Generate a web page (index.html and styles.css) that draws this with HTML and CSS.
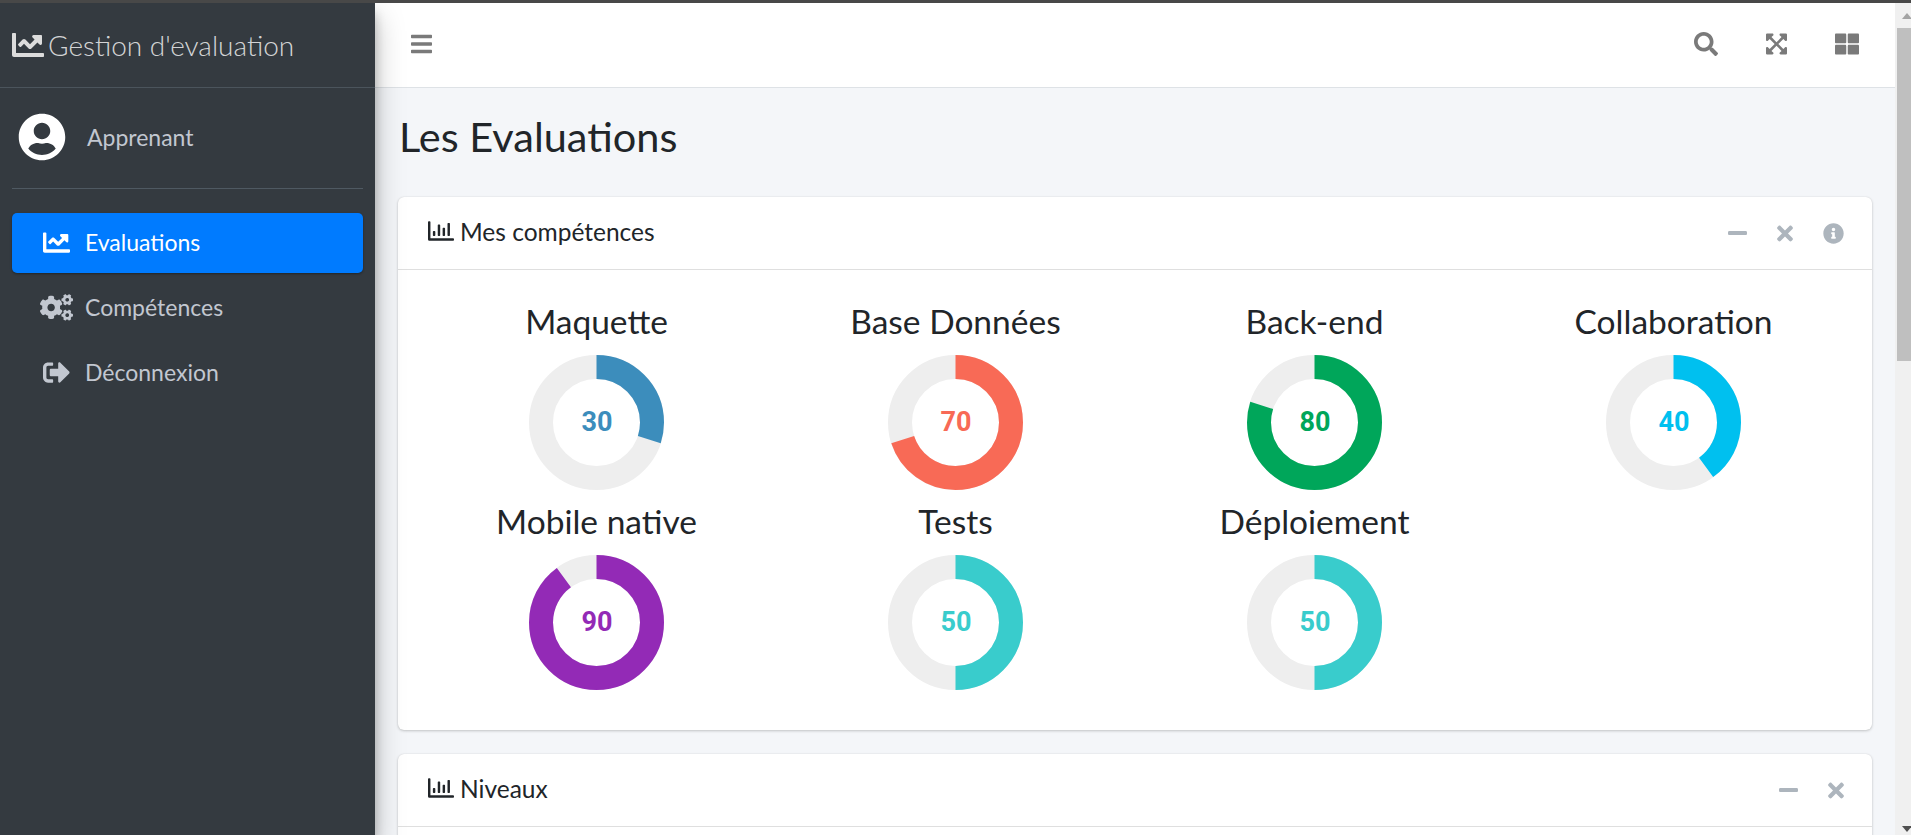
FILE: index.html
```html
<!DOCTYPE html>
<html lang="fr">
<head>
    <meta charset="UTF-8">
    <meta name="viewport" content="width=device-width, initial-scale=1.0">
    <title>Gestion d'evaluation</title>
    <link rel="stylesheet" href="styles.css">
</head>
<body>
    <svg class="icon-defs" aria-hidden="true">
        <symbol id="i-chart-line" viewBox="0 0 512 512"><path d="M496 384H64V80c0-8.84-7.16-16-16-16H16C7.16 64 0 71.16 0 80v336c0 17.67 14.33 32 32 32h464c8.84 0 16-7.16 16-16v-32c0-8.84-7.16-16-16-16zM464 96H345.94c-21.38 0-32.09 25.85-16.97 40.97l32.4 32.4L288 242.75l-73.37-73.37c-12.5-12.5-32.76-12.5-45.25 0l-68.69 68.69c-6.25 6.25-6.25 16.38 0 22.63l22.62 22.62c6.25 6.25 16.38 6.25 22.63 0L192 237.25l73.37 73.37c12.5 12.5 32.76 12.5 45.25 0l96-96 32.4 32.4c15.12 15.12 40.97 4.41 40.97-16.97V112c.01-8.84-7.15-16-15.99-16z"/></symbol>
        <symbol id="i-chart-bar" viewBox="0 0 512 512"><path d="M396.8 352h22.4c6.4 0 12.8-6.4 12.8-12.8V108.8c0-6.4-6.4-12.8-12.8-12.8h-22.4c-6.4 0-12.8 6.4-12.8 12.8v230.4c0 6.4 6.4 12.8 12.8 12.8zm-192 0h22.4c6.4 0 12.8-6.4 12.8-12.8V140.8c0-6.4-6.4-12.8-12.8-12.8h-22.4c-6.4 0-12.8 6.4-12.8 12.8v198.4c0 6.4 6.4 12.8 12.8 12.8zm96 0h22.4c6.4 0 12.8-6.4 12.8-12.8V204.8c0-6.4-6.4-12.8-12.8-12.8h-22.4c-6.4 0-12.8 6.4-12.8 12.8v134.4c0 6.4 6.4 12.8 12.8 12.8zM496 400H48V80c0-8.84-7.16-16-16-16H16C7.16 64 0 71.16 0 80v336c0 17.67 14.33 32 32 32h464c8.84 0 16-7.16 16-16v-16c0-8.84-7.16-16-16-16zm-387.2-48h22.4c6.4 0 12.8-6.4 12.8-12.8v-70.4c0-6.4-6.4-12.8-12.8-12.8h-22.4c-6.4 0-12.8 6.4-12.8 12.8v70.4c0 6.4 6.4 12.8 12.8 12.8z"/></symbol>
        <symbol id="i-minus" viewBox="0 0 448 512"><path d="M416 208H32c-17.67 0-32 14.33-32 32v32c0 17.67 14.33 32 32 32h384c17.67 0 32-14.33 32-32v-32c0-17.67-14.33-32-32-32z"/></symbol>
        <symbol id="i-times" viewBox="0 0 352 512"><path d="M242.72 256l100.07-100.07c12.28-12.28 12.28-32.19 0-44.48l-22.24-22.24c-12.28-12.28-32.19-12.28-44.48 0L176 189.28 75.93 89.21c-12.28-12.28-32.19-12.28-44.48 0L9.21 111.45c-12.28 12.28-12.28 32.19 0 44.48L109.28 256 9.21 356.07c-12.28 12.28-12.28 32.19 0 44.48l22.24 22.24c12.28 12.28 32.2 12.28 44.48 0L176 322.72l100.07 100.07c12.28 12.28 32.2 12.28 44.48 0l22.24-22.24c12.28-12.28 12.28-32.19 0-44.48L242.72 256z"/></symbol>
    </svg>

    <div class="app">
        <aside class="sidebar">
            <div class="brand">
                <svg class="brand-icon"><use href="#i-chart-line"/></svg>
                <span>Gestion d'evaluation</span>
            </div>
            <div class="sidebar-inner">
                <div class="user-panel">
                    <svg class="user-icon" viewBox="0 0 496 512"><path d="M248 8C111 8 0 119 0 256s111 248 248 248 248-111 248-248S385 8 248 8zm0 96c48.6 0 88 39.4 88 88s-39.4 88-88 88-88-39.4-88-88 39.4-88 88-88zm0 344c-58.7 0-111.3-26.6-146.5-68.2 18.8-35.4 55.6-59.8 98.5-59.8 2.4 0 4.8.4 7.1 1.1 13 4.2 26.6 6.9 40.9 6.9 14.3 0 28-2.7 40.9-6.9 2.3-.7 4.7-1.1 7.1-1.1 42.9 0 79.7 24.4 98.5 59.8C359.3 421.4 306.7 448 248 448z"/></svg>
                    <span>Apprenant</span>
                </div>
                <nav class="nav">
                    <a class="nav-link active">
                        <span class="nav-icon"><svg class="icon-chart"><use href="#i-chart-line"/></svg></span>
                        Evaluations
                    </a>
                    <a class="nav-link">
                        <span class="nav-icon"><svg class="icon-cogs" viewBox="0 0 640 512"><path d="M512.1 191l-8.2 14.3c-3 5.3-9.4 7.5-15.1 5.4-11.8-4.4-22.6-10.7-32.1-18.6-4.6-3.8-5.8-10.5-2.8-15.7l8.2-14.3c-6.9-8-12.3-17.3-15.9-27.4h-16.5c-6 0-11.2-4.3-12.2-10.3-2-12-2.1-24.6 0-37.1 1-6 6.2-10.4 12.2-10.4h16.5c3.6-10.1 9-19.4 15.9-27.4l-8.2-14.3c-3-5.2-1.9-11.9 2.8-15.7 9.5-7.9 20.4-14.2 32.1-18.6 5.7-2.1 12.1.1 15.1 5.4l8.2 14.3c10.5-1.9 21.2-1.9 31.7 0L552 6.3c3-5.3 9.4-7.5 15.1-5.4 11.8 4.4 22.6 10.7 32.1 18.6 4.6 3.8 5.8 10.5 2.8 15.7l-8.2 14.3c6.9 8 12.3 17.3 15.9 27.4h16.5c6 0 11.2 4.3 12.2 10.3 2 12 2.1 24.6 0 37.1-1 6-6.2 10.4-12.2 10.4h-16.5c-3.6 10.1-9 19.4-15.9 27.4l8.2 14.3c3 5.2 1.9 11.9-2.8 15.7-9.5 7.9-20.4 14.2-32.1 18.6-5.7 2.1-12.1-.1-15.1-5.4l-8.2-14.3c-10.4 1.9-21.2 1.9-31.7 0zm-10.5-58.8c38.5 29.6 82.4-14.3 52.8-52.8-38.5-29.7-82.4 14.3-52.8 52.8zM386.3 286.1l33.7 16.8c10.1 5.8 14.5 18.1 10.5 29.1-8.9 24.2-26.4 46.4-42.6 65.8-7.4 8.9-20.2 11.1-30.3 5.3l-29.1-16.8c-16 13.7-34.6 24.6-54.9 31.7v33.6c0 11.6-8.3 21.6-19.7 23.6-24.6 4.2-50.4 4.4-75.9 0-11.5-2-20-11.9-20-23.6V418c-20.3-7.2-38.9-18-54.9-31.7L74 403c-10 5.8-22.9 3.6-30.3-5.3-16.2-19.4-33.3-41.6-42.2-65.7-4-10.9.4-23.2 10.5-29.1l33.3-16.8c-3.9-20.9-3.9-42.4 0-63.4L12 205.8c-10.1-5.8-14.6-18.1-10.5-29 8.9-24.2 26-46.4 42.2-65.8 7.4-8.9 20.2-11.1 30.3-5.3l29.1 16.8c16-13.7 34.6-24.6 54.9-31.7V57.1c0-11.5 8.2-21.5 19.6-23.5 24.6-4.2 50.5-4.4 76-.1 11.5 2 20 11.9 20 23.6v33.6c20.3 7.2 38.9 18 54.9 31.7l29.1-16.8c10-5.8 22.9-3.6 30.3 5.3 16.2 19.4 33.2 41.6 42.1 65.8 4 10.9.1 23.2-10 29.1l-33.7 16.8c3.9 21 3.9 42.5 0 63.5zm-117.6 21.1c59.2-77-28.7-164.9-105.7-105.7-59.2 77 28.7 164.9 105.7 105.7zm243.4 182.7l-8.2 14.3c-3 5.3-9.4 7.5-15.1 5.4-11.8-4.4-22.6-10.7-32.1-18.6-4.6-3.8-5.8-10.5-2.8-15.7l8.2-14.3c-6.9-8-12.3-17.3-15.9-27.4h-16.5c-6 0-11.2-4.3-12.2-10.3-2-12-2.1-24.6 0-37.1 1-6 6.2-10.4 12.2-10.4h16.5c3.6-10.1 9-19.4 15.9-27.4l-8.2-14.3c-3-5.2-1.9-11.9 2.8-15.7 9.5-7.9 20.4-14.2 32.1-18.6 5.7-2.1 12.1.1 15.1 5.4l8.2 14.3c10.5-1.9 21.2-1.9 31.7 0l8.2-14.3c3-5.3 9.4-7.5 15.1-5.4 11.8 4.4 22.6 10.7 32.1 18.6 4.6 3.8 5.8 10.5 2.8 15.7l-8.2 14.3c6.9 8 12.3 17.3 15.9 27.4h16.5c6 0 11.2 4.3 12.2 10.3 2 12 2.1 24.6 0 37.1-1 6-6.2 10.4-12.2 10.4h-16.5c-3.6 10.1-9 19.4-15.9 27.4l8.2 14.3c3 5.2 1.9 11.9-2.8 15.7-9.5 7.9-20.4 14.2-32.1 18.6-5.7 2.1-12.1-.1-15.1-5.4l-8.2-14.3c-10.4 1.9-21.2 1.9-31.7 0zM501.6 431c38.5 29.6 82.4-14.3 52.8-52.8-38.5-29.6-82.4 14.3-52.8 52.8z"/></svg></span>
                        Compétences
                    </a>
                    <a class="nav-link">
                        <span class="nav-icon"><svg class="icon-chart" viewBox="0 0 512 512"><path d="M497 273L329 441c-15 15-41 4.5-41-17v-96H152c-13.3 0-24-10.7-24-24v-96c0-13.3 10.7-24 24-24h136V88c0-21.4 25.9-32 41-17l168 168c9.3 9.4 9.3 24.6 0 34zM192 436v-40c0-6.6-5.4-12-12-12H96c-17.7 0-32-14.3-32-32V160c0-17.7 14.3-32 32-32h84c6.6 0 12-5.4 12-12V76c0-6.6-5.4-12-12-12H96c-53 0-96 43-96 96v192c0 53 43 96 96 96h84c6.6 0 12-5.4 12-12z"/></svg></span>
                        Déconnexion
                    </a>
                </nav>
            </div>
        </aside>

        <div class="main">
            <header class="topbar">
                <svg class="top-icon bars" viewBox="0 0 448 512"><path d="M16 132h416c8.837 0 16-7.163 16-16V76c0-8.837-7.163-16-16-16H16C7.163 60 0 67.163 0 76v40c0 8.837 7.163 16 16 16zm0 160h416c8.837 0 16-7.163 16-16v-40c0-8.837-7.163-16-16-16H16c-8.837 0-16 7.163-16 16v40c0 8.837 7.163 16 16 16zm0 160h416c8.837 0 16-7.163 16-16v-40c0-8.837-7.163-16-16-16H16c-8.837 0-16 7.163-16 16v40c0 8.837 7.163 16 16 16z"/></svg>
                <div class="top-actions">
                    <svg class="top-icon wide" viewBox="0 0 512 512"><path d="M505 442.7L405.3 343c-4.5-4.5-10.6-7-17-7H372c27.6-35.3 44-79.7 44-128C416 93.1 322.9 0 208 0S0 93.1 0 208s93.1 208 208 208c48.3 0 92.7-16.4 128-44v16.3c0 6.4 2.5 12.5 7 17l99.7 99.7c9.4 9.4 24.6 9.4 33.9 0l28.3-28.3c9.4-9.4 9.4-24.6.1-34zM208 336c-70.7 0-128-57.2-128-128 0-70.7 57.2-128 128-128 70.7 0 128 57.2 128 128 0 70.7-57.2 128-128 128z"/></svg>
                    <svg class="top-icon bars" viewBox="0 0 448 512"><path d="M448 344v112a23.94 23.94 0 0 1-24 24H312c-21.39 0-32.09-25.9-17-41l36.2-36.2L224 295.6 116.77 402.9 153 439c15.09 15.1 4.39 41-17 41H24a23.94 23.94 0 0 1-24-24V344c0-21.4 25.89-32 41-17l36.19 36.2L184.46 256 77.18 148.7 41 185c-15.1 15.1-41 4.4-41-17V56a23.94 23.94 0 0 1 24-24h112c21.39 0 32.09 25.9 17 41l-36.2 36.2L224 216.4l107.23-107.3L295 73c-15.09-15.1-4.39-41 17-41h112a23.94 23.94 0 0 1 24 24v112c0 21.4-25.89 32-41 17l-36.19-36.2L263.54 256l107.28 107.3L407 327.1c15.1-15.2 41-4.5 41 16.9z"/></svg>
                    <svg class="top-icon wide" viewBox="0 0 512 512"><path d="M296 32h192c13.255 0 24 10.745 24 24v160c0 13.255-10.745 24-24 24H296c-13.255 0-24-10.745-24-24V56c0-13.255 10.745-24 24-24zm-80 0H24C10.745 32 0 42.745 0 56v160c0 13.255 10.745 24 24 24h192c13.255 0 24-10.745 24-24V56c0-13.255-10.745-24-24-24zM0 296v160c0 13.255 10.745 24 24 24h192c13.255 0 24-10.745 24-24V296c0-13.255-10.745-24-24-24H24c-13.255 0-24 10.745-24 24zm296 184h192c13.255 0 24-10.745 24-24V296c0-13.255-10.745-24-24-24H296c-13.255 0-24 10.745-24 24v160c0 13.255 10.745 24 24 24z"/></svg>
                </div>
            </header>

            <main class="content">
                <h1 class="page-title">Les Evaluations</h1>

                <section class="card">
                    <div class="card-header">
                        <h3 class="card-title"><svg class="title-icon"><use href="#i-chart-bar"/></svg>Mes compétences</h3>
                        <div class="card-tools">
                            <svg class="tool-minus"><use href="#i-minus"/></svg>
                            <svg class="tool-times"><use href="#i-times"/></svg>
                            <svg class="tool-info" viewBox="0 0 512 512"><path d="M256 8C119.043 8 8 119.083 8 256c0 136.997 111.043 248 248 248s248-111.003 248-248C504 119.083 392.957 8 256 8zm0 110c23.196 0 42 18.804 42 42s-18.804 42-42 42-42-18.804-42-42 18.804-42 42-42zm56 254c0 6.627-5.373 12-12 12h-88c-6.627 0-12-5.373-12-12v-24c0-6.627 5.373-12 12-12h12v-64h-12c-6.627 0-12-5.373-12-12v-24c0-6.627 5.373-12 12-12h64c6.627 0 12 5.373 12 12v100h12c6.627 0 12 5.373 12 12v24z"/></svg>
                        </div>
                    </div>
                    <div class="card-body skills">
                        <div class="skill blue">
                            <div class="skill-name">Maquette</div>
                            <svg class="donut" viewBox="0 0 135 135"><circle class="track" cx="67.5" cy="67.5" r="55.5"/><circle class="arc" cx="67.5" cy="67.5" r="55.5" pathLength="100" stroke-dasharray="30 100"/><text x="68" y="67">30</text></svg>
                        </div>
                        <div class="skill red">
                            <div class="skill-name">Base Données</div>
                            <svg class="donut" viewBox="0 0 135 135"><circle class="track" cx="67.5" cy="67.5" r="55.5"/><circle class="arc" cx="67.5" cy="67.5" r="55.5" pathLength="100" stroke-dasharray="70 100"/><text x="68" y="67">70</text></svg>
                        </div>
                        <div class="skill green">
                            <div class="skill-name">Back-end</div>
                            <svg class="donut" viewBox="0 0 135 135"><circle class="track" cx="67.5" cy="67.5" r="55.5"/><circle class="arc" cx="67.5" cy="67.5" r="55.5" pathLength="100" stroke-dasharray="80 100"/><text x="68" y="67">80</text></svg>
                        </div>
                        <div class="skill sky">
                            <div class="skill-name">Collaboration</div>
                            <svg class="donut" viewBox="0 0 135 135"><circle class="track" cx="67.5" cy="67.5" r="55.5"/><circle class="arc" cx="67.5" cy="67.5" r="55.5" pathLength="100" stroke-dasharray="40 100"/><text x="68" y="67">40</text></svg>
                        </div>
                        <div class="skill purple">
                            <div class="skill-name">Mobile native</div>
                            <svg class="donut" viewBox="0 0 135 135"><circle class="track" cx="67.5" cy="67.5" r="55.5"/><circle class="arc" cx="67.5" cy="67.5" r="55.5" pathLength="100" stroke-dasharray="90 100"/><text x="68" y="67">90</text></svg>
                        </div>
                        <div class="skill teal">
                            <div class="skill-name">Tests</div>
                            <svg class="donut" viewBox="0 0 135 135"><circle class="track" cx="67.5" cy="67.5" r="55.5"/><circle class="arc" cx="67.5" cy="67.5" r="55.5" pathLength="100" stroke-dasharray="50 100"/><text x="68" y="67">50</text></svg>
                        </div>
                        <div class="skill teal">
                            <div class="skill-name">Déploiement</div>
                            <svg class="donut" viewBox="0 0 135 135"><circle class="track" cx="67.5" cy="67.5" r="55.5"/><circle class="arc" cx="67.5" cy="67.5" r="55.5" pathLength="100" stroke-dasharray="50 100"/><text x="68" y="67">50</text></svg>
                        </div>
                    </div>
                </section>

                <section class="card">
                    <div class="card-header">
                        <h3 class="card-title"><svg class="title-icon"><use href="#i-chart-bar"/></svg>Niveaux</h3>
                        <div class="card-tools">
                            <svg class="tool-minus"><use href="#i-minus"/></svg>
                            <svg class="tool-times"><use href="#i-times"/></svg>
                        </div>
                    </div>
                    <div class="card-body levels"></div>
                </section>
            </main>
        </div>

        <div class="scrollbar">
            <span class="arrow-up"></span>
            <span class="thumb"></span>
            <span class="arrow-down"></span>
        </div>
    </div>
</body>
</html>
```

FILE: styles.css
```css
* {
    box-sizing: border-box;
}
html, body {
    height: 100%;
    margin: 0;
    overflow: hidden;
}
body {
    font-family: Lato, "Noto Sans", Arial, sans-serif;
    color: #212529;
    background: #f4f6f9;
    border-top: 3px solid #484848;
}
.icon-defs {
    display: none;
}
.app {
    display: flex;
    height: 832px;
}

/* sidebar */
.sidebar {
    flex: 0 0 375px;
    background: #343a40;
    position: relative;
    z-index: 2;
    box-shadow: 0 14px 28px rgba(0,0,0,0.25), 0 10px 10px rgba(0,0,0,0.22);
}
.brand {
    height: 85px;
    display: flex;
    align-items: center;
    padding-left: 12px;
    border-bottom: 1px solid #4b545c;
    color: rgba(255,255,255,0.8);
    font-size: 28px;
    font-weight: 300;
}
.brand-icon {
    width: 32px;
    height: 32px;
    margin-right: 4px;
    fill: #dcdcdc;
}
.sidebar-inner {
    padding: 0 12px;
}
.user-panel {
    height: 101px;
    display: flex;
    align-items: center;
    padding-left: 6px;
    padding-bottom: 2px;
    border-bottom: 1px solid #4f5962;
    color: #c2c7d0;
    font-size: 23px;
}
.user-icon {
    width: 48px;
    height: 48px;
    margin-right: 21px;
    fill: #fff;
}
.nav {
    display: flex;
    flex-direction: column;
    gap: 5px;
    padding-top: 24px;
}
.nav-link {
    height: 60px;
    display: flex;
    align-items: center;
    padding-bottom: 2px;
    border-radius: 5px;
    color: #c2c7d0;
    font-size: 23px;
}
.nav-link.active {
    background: #007bff;
    color: #fff;
    box-shadow: 0 1px 3px rgba(0,0,0,0.12), 0 1px 2px rgba(0,0,0,0.24);
}
.nav-icon {
    width: 73px;
    padding-left: 28px;
    display: flex;
    align-items: center;
    justify-content: flex-start;
}
.nav-icon svg {
    fill: currentColor;
}
.icon-chart {
    width: 27px;
    height: 27px;
    margin-left: 3px;
}
.icon-cogs {
    width: 33px;
    height: 27px;
}

/* main */
.main {
    flex: 1;
    min-width: 0;
    display: flex;
    flex-direction: column;
}
.topbar {
    flex: 0 0 85px;
    display: flex;
    align-items: center;
    justify-content: space-between;
    padding: 0 36px 2px 36px;
    background: #fff;
    border-bottom: 1px solid #dee2e6;
}
.top-icon {
    height: 24px;
    fill: #7a7a7a;
}
.top-icon.bars {
    width: 21px;
}
.top-icon.wide {
    width: 24px;
}
.top-actions {
    display: flex;
    align-items: center;
    gap: 48px;
}
.content {
    flex: 1;
    overflow: hidden;
    padding: 0 23px;
}
.page-title {
    margin: 0;
    height: 109px;
    padding: 24px 1px 0;
    font-size: 41.5px;
    font-weight: 400;
    line-height: 48px;
}

/* cards */
.card {
    background: #fff;
    border-radius: 6px;
    box-shadow: 0 0 1px rgba(0,0,0,0.125), 0 1px 3px rgba(0,0,0,0.2);
    margin-bottom: 24px;
}
.card-header {
    height: 73px;
    display: flex;
    align-items: center;
    justify-content: space-between;
    padding: 0 28px 0 30px;
    border-bottom: 1px solid rgba(0,0,0,0.125);
}
.card-title {
    display: flex;
    align-items: center;
    margin: 0 0 4px;
    font-size: 24.5px;
    font-weight: 400;
}
.title-icon {
    width: 26px;
    height: 26px;
    margin-right: 6px;
    fill: #212529;
}
.card-tools {
    display: flex;
    align-items: center;
    gap: 30px;
    fill: #adb5bd;
}
.tool-minus {
    width: 19px;
    height: 22px;
}
.tool-times {
    width: 16px;
    height: 23px;
}
.tool-info {
    width: 21px;
    height: 21px;
}
.skills {
    display: grid;
    grid-template-columns: repeat(4, 359px);
    grid-auto-rows: 200px;
    padding: 30px 19px;
}
.skill {
    display: flex;
    flex-direction: column;
    align-items: center;
}
.skill-name {
    height: 55px;
    color: #212529;
    font-size: 33.5px;
    line-height: 42px;
}
.levels {
    height: 200px;
}

/* donuts */
.donut {
    width: 135px;
    height: 135px;
    flex: none;
}
.donut circle {
    fill: none;
    stroke-width: 24;
}
.donut .track {
    stroke: #eeeeee;
}
.donut .arc {
    stroke: currentColor;
    transform: rotate(-90deg);
    transform-origin: 67.5px 67.5px;
}
.donut text {
    fill: currentColor;
    font-family: Roboto, "Liberation Sans", Arial, sans-serif;
    font-size: 27px;
    font-weight: 700;
    text-anchor: middle;
    dominant-baseline: central;
}
.blue { color: #3c8dbc; }
.red { color: #f86a56; }
.green { color: #00a65a; }
.sky { color: #00c0ef; }
.purple { color: #932ab6; }
.teal { color: #39cccc; }

/* fake window scrollbar, cut off by the edge of the shot */
.scrollbar {
    flex: 0 0 16px;
    display: flex;
    flex-direction: column;
    align-items: flex-end;
    background: #f0f0f0;
    position: relative;
}
.thumb {
    position: absolute;
    top: 25px;
    right: 0;
    width: 14px;
    height: 333px;
    background: #bfbfbf;
}
.arrow-up, .arrow-down {
    position: absolute;
    right: -1px;
    width: 0;
    height: 0;
    border-left: 5px solid transparent;
    border-right: 5px solid transparent;
}
.arrow-up {
    top: 10px;
    border-bottom: 6px solid #a3a3a3;
}
.arrow-down {
    bottom: 3px;
    border-top: 6px solid #505050;
}
```
